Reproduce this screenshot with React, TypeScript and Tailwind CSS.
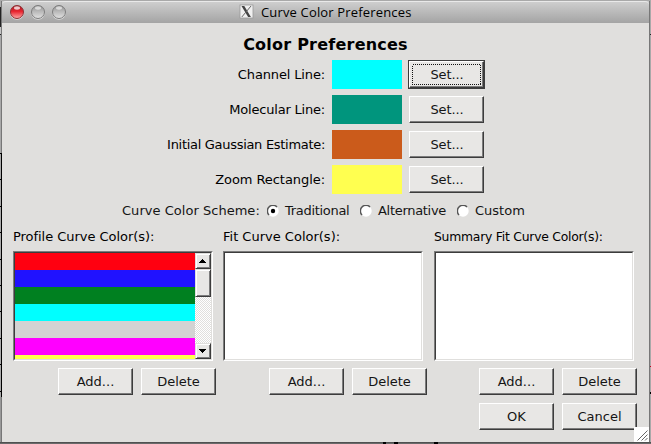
import type { ReactNode } from "react";

function Button({ children, focused = false }: { children: ReactNode; focused?: boolean }) {
  const face = (
    <button className="relative block h-[27px] w-[75px] border-t border-l border-r border-b border-t-white border-l-white border-r-[#3c3c3c] border-b-[#3c3c3c] bg-[#e8e7e5] text-[13px] leading-[23px] text-[#151515] shadow-[inset_-1px_-1px_0_#7c7c7c]">
      {children}
      {focused && (
        <svg className="absolute top-[2px] left-[2px]" width="69" height="21" shapeRendering="crispEdges">
          <rect x="0.5" y="0.5" width="68" height="20" fill="none" stroke="#111" strokeDasharray="1 1" />
        </svg>
      )}
    </button>
  );
  return focused ? <div className="-ml-px bg-[#3c3c3c] p-px">{face}</div> : face;
}

function ColorRow({ label, swatch, tracking, focused }: { label: string; swatch: string; tracking: string; focused?: boolean }) {
  return (
    <div className="flex h-[29px] items-center">
      <div className={`w-[324px] pr-px text-right text-[13px] leading-4 whitespace-nowrap ${tracking}`}>{label}</div>
      <div className={`ml-[6px] h-[29px] w-[70px] ${swatch}`} />
      <div className="ml-[7px]">
        <Button focused={focused}>
          <span className="pl-px tracking-[-0.1px]">Set...</span>
        </Button>
      </div>
    </div>
  );
}

function Radio({ checked = false }: { checked?: boolean }) {
  return (
    <svg width="12" height="12" viewBox="0 0 12 12" className="block shrink-0">
      <circle cx="6" cy="6" r="5.7" fill="#fff" />
      <path d="M2 10A5.5 5.5 0 0 1 10 2" fill="none" stroke="#555" strokeWidth="1.5" />
      {checked && <circle cx="6" cy="6" r="2.2" fill="#000" />}
    </svg>
  );
}

function ArrowButton({ down = false }: { down?: boolean }) {
  return (
    <div className="flex h-4 w-4 shrink-0 items-center justify-center border border-t-[#e0dfdd] border-l-[#e0dfdd] border-r-[#3c3c3c] border-b-[#3c3c3c] bg-[#e8e7e5] shadow-[inset_1px_1px_0_#fff,inset_-1px_-1px_0_#7c7c7c]">
      <svg width="8" height="4" shapeRendering="crispEdges">
        <path d={down ? "M0 0h7v1h-1v1h-1v1h-1v1h-1v-1h-1v-1h-1v-1h-1z" : "M3 0h1v1h1v1h1v1h1v1h-7v-1h1v-1h1v-1h1z"} fill="#000" />
      </svg>
    </div>
  );
}

function ListBox({ children }: { children?: ReactNode }) {
  return (
    <div className="h-[110px] w-[200px] border border-t-[#7c7c7c] border-l-[#7c7c7c] border-r-white border-b-white">
      <div className="flex h-[108px] w-[198px] overflow-hidden border border-t-[#3c3c3c] border-l-[#3c3c3c] border-r-[#e0dfdd] border-b-[#e0dfdd] bg-white">
        {children}
      </div>
    </div>
  );
}

const curveColors = ["bg-[#ff0010]", "bg-[#2012ff]", "bg-[#008020]", "bg-[#00ffff]", "bg-[#d3d3d3]", "bg-[#ff00ff]", "bg-[#ffff4d]"];

function ProfileList() {
  return (
    <ListBox>
      <div className="w-[180px]">
        {curveColors.map((c) => (
          <div key={c} className={`h-[17px] ${c}`} />
        ))}
      </div>
      <div className="flex h-[106px] w-4 flex-col bg-[repeating-conic-gradient(#ffffff_0_25%,#e0dfdd_0_50%)] bg-[length:2px_2px]">
        <ArrowButton />
        <div className="h-7 border border-t-[#e0dfdd] border-l-[#e0dfdd] border-r-[#3c3c3c] border-b-[#3c3c3c] bg-[#e8e7e5] shadow-[inset_1px_1px_0_#fff,inset_-1px_-1px_0_#7c7c7c]" />
        <div className="flex-1" />
        <ArrowButton down />
      </div>
    </ListBox>
  );
}

function Column({ title, width, padding, type, children }: { title: string; width: string; padding: string; type: string; children: ReactNode }) {
  return (
    <div className={`shrink-0 ${width}`}>
      <div className={`h-[22px] leading-4 whitespace-nowrap ${type}`}>{title}</div>
      {children}
      <div className={`mt-[7px] flex gap-2 ${padding}`}>
        <Button>Add...</Button>
        <Button>Delete</Button>
      </div>
    </div>
  );
}

function Light({ red = false }: { red?: boolean }) {
  const id = red ? "close" : "idle";
  return (
    <svg width="16" height="16" viewBox="0 0 16 16">
      <defs>
        <linearGradient id={id} x1="0" y1="0" x2="0" y2="1">
          <stop offset="0" stopColor={red ? "#9c2028" : "#929292"} />
          <stop offset="0.45" stopColor={red ? "#e8232e" : "#b8b8b8"} />
          <stop offset="1" stopColor={red ? "#ffaaa8" : "#e2e2e2"} />
        </linearGradient>
      </defs>
      <circle cx="8" cy="8.8" r="6.9" fill="#dedede" />
      <circle cx="8" cy="8" r="6.5" fill={`url(#${id})`} stroke={red ? "#8d3034" : "#7c7c7c"} strokeWidth="1" />
      <ellipse cx="8" cy="4" rx="3" ry="1.7" fill="#fff" opacity={red ? 0.75 : 0.6} />
    </svg>
  );
}

function TitleBar() {
  return (
    <div className="flex h-[22px] items-center rounded-t-[4px] border-t border-t-[#e9e9e9] bg-linear-to-b from-[#cecece] to-[#a4a4a4] pb-[2px] pl-[7px]">
      <div className="flex gap-[5px]">
        <Light red />
        <Light />
        <Light />
      </div>
      <svg className="ml-[172px]" width="15" height="15" viewBox="0 0 15 15">
        <rect x="1" y="1" width="13" height="13" fill="#f0f0f0" stroke="#999" strokeWidth="0.8" />
        <path d="M2.5 2h2.8l6.6 11h-2.8z" fill="#444" />
        <path d="M12 2L2.8 13" stroke="#666" strokeWidth="1" />
      </svg>
      <div className="ml-[7px] font-['Open_Sans','Noto_Sans',sans-serif] text-[13px] leading-5 tracking-[0.16px] whitespace-nowrap text-black">Curve Color Preferences</div>
    </div>
  );
}

export default function App() {
  return (
    <div className="relative flex h-[444px] w-[651px] flex-col overflow-hidden bg-[#a9a9a9] font-['DejaVu_Sans',sans-serif] text-black">
      <div className="flex h-[442px] pt-px">
        <div className="flex w-[2px] flex-col border-r border-r-[#777]">
          <div className="h-[6px]" />
          <div className="h-[20px] bg-[#222]" />
          <div className="h-[7px] bg-[#c4c4c4]" />
          <div className="h-px bg-[#222]" />
          <div className="h-[118px] bg-[#a9a9a9]" />
          <div className="-mr-px h-[244px] border-r border-r-black bg-[repeating-linear-gradient(to_bottom,#000_0_1px,#aaa_1px_26.4px)]" />
          <div className="flex-1 bg-[#999]" />
        </div>
        <div className="w-[647px] bg-[#e0dfdd]">
          <div className="bg-[#c8c8c8]">
            <TitleBar />
          </div>
          <h1 className="h-[37px] pt-[12px] text-center text-[16px] leading-5 font-bold tracking-[0.22px]">Color Preferences</h1>
          <div className="flex flex-col gap-[6px]">
            <ColorRow label="Channel Line:" swatch="bg-[#00ffff]" tracking="tracking-[-0.14px]" focused />
            <ColorRow label="Molecular Line:" swatch="bg-[#00957d]" tracking="tracking-[-0.2px]" />
            <ColorRow label="Initial Gaussian Estimate:" swatch="bg-[#cb5b1b]" tracking="tracking-[-0.3px]" />
            <ColorRow label="Zoom Rectangle:" swatch="bg-[#ffff50]" tracking="tracking-[-0.06px]" />
          </div>
          <div className="flex h-[35px] items-center pb-[2px] pl-[120px] text-[13px] leading-4 whitespace-nowrap text-[#151515]">
            <div className="w-[145px] tracking-[0.03px]">Curve Color Scheme:</div>
            <Radio checked />
            <div className="ml-[6px] w-[75px] tracking-[-0.3px]">Traditional</div>
            <Radio />
            <div className="ml-[6px] w-[79px] tracking-[-0.3px]">Alternative</div>
            <Radio />
            <div className="ml-[6px]">Custom</div>
          </div>
          <div className="flex pl-[11px]">
            <Column title="Profile Curve Color(s):" width="w-[210px]" padding="pl-[45px]" type="text-[13px] tracking-[-0.04px]">
              <ProfileList />
            </Column>
            <Column title="Fit Curve Color(s):" width="w-[211px]" padding="pl-[46px]" type="text-[13px] tracking-normal">
              <ListBox />
            </Column>
            <Column title="Summary Fit Curve Color(s):" width="w-[211px]" padding="pl-[45px]" type="text-[12.4px] tracking-[-0.25px]">
              <ListBox />
            </Column>
          </div>
          <div className="mt-2 flex gap-2 pl-[477px]">
            <Button>OK</Button>
            <Button>Cancel</Button>
          </div>
        </div>
        <div className="flex w-[2px] flex-col border-l border-l-[#777]">
          <div className="h-[33px]" />
          <div className="h-px bg-[#222]" />
          <div className="h-[331px]" />
          <div className="h-px bg-[#c00020]" />
          <div className="h-[25px]" />
          <div className="h-[2px] bg-black" />
        </div>
      </div>
      <div className="flex h-[2px] bg-linear-to-b from-[#444] to-[#777]">
        <div className="ml-[383px] h-[2px] w-[3px] bg-black" />
        <div className="ml-[8px] h-[2px] w-[4px] bg-black" />
        <div className="ml-[36px] h-[2px] w-[4px] bg-black" />
      </div>
      <svg className="absolute top-[427px] left-[634px]" width="15" height="15">
        <rect width="15" height="15" fill="#fff" />
        <path d="M3.5 13.5L13.5 3.5M7.5 13.5L13.5 7.5M11 13.5L13.5 11" stroke="#666" strokeWidth="1" />
      </svg>
    </div>
  );
}
